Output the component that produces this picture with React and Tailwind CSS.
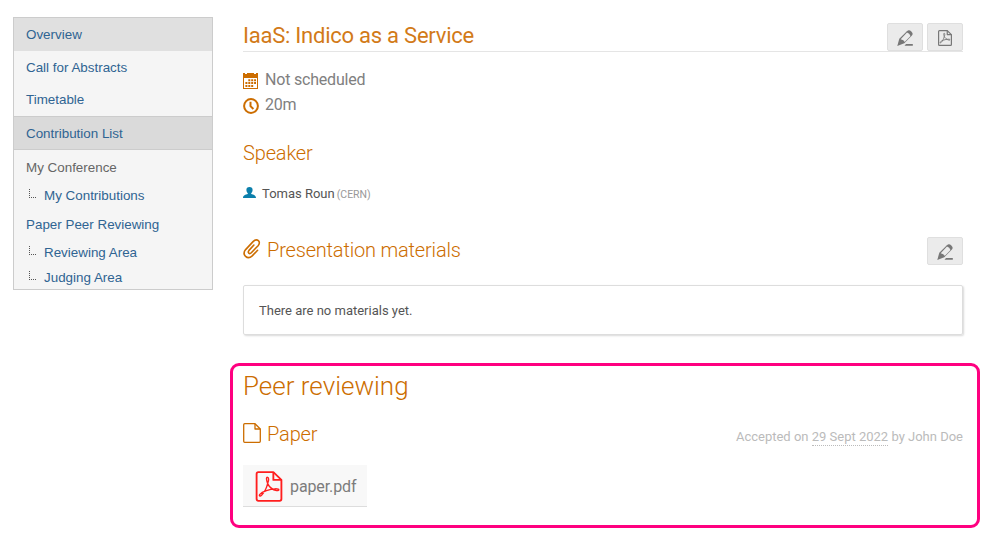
const linkColor = 'text-[#2f6492]';

function SideItem({ children, className = '' }) {
  return <li className={`flex items-center pl-3 ${className}`}>{children}</li>;
}

function SubItem({ children, className = '' }) {
  return (
    <li className={`flex items-center pl-[15px] ${linkColor} ${className}`}>
      <svg className="mr-2 mb-1 h-[9px] w-[7px] shrink-0" viewBox="0 0 7 9" shapeRendering="crispEdges">
        <path d="M.5 0v9M0 8.500h7" fill="none" stroke="#555" strokeDasharray="1 1" />
      </svg>
      {children}
    </li>
  );
}

function Sidebar() {
  return (
    <nav className="h-[273px] w-[200px] shrink-0 border border-[#cccccc] bg-[#f5f5f5] font-['Liberation_Sans',Arial,sans-serif] text-[13.4px] leading-4">
      <ul>
        <SideItem className={`h-[33px] bg-[#e0e0e0] ${linkColor}`}>Overview</SideItem>
        <SideItem className={`h-8 pt-px ${linkColor}`}>Call for Abstracts</SideItem>
        <SideItem className={`h-[33px] ${linkColor}`}>Timetable</SideItem>
        <SideItem className={`h-[34px] border-y border-[#cccccc] bg-[#dadada] pt-px ${linkColor}`}>Contribution List</SideItem>
        <SideItem className="h-[34px] pt-px text-[#666]">My Conference</SideItem>
        <SubItem className="h-[23px]">My Contributions</SubItem>
        <SideItem className={`h-[34px] pt-px ${linkColor}`}>Paper Peer Reviewing</SideItem>
        <SubItem className="h-[23px]">Reviewing Area</SubItem>
        <SubItem className="h-[25px] pt-[2px]">Judging Area</SubItem>
      </ul>
    </nav>
  );
}

function IconButton({ children }) {
  return (
    <button className="flex h-7 w-9 items-center justify-center rounded-[2px] border border-[#dfdfdf] bg-[#ebebeb] pt-px text-[#777]">
      {children}
    </button>
  );
}

function PencilIcon() {
  return (
    <svg className="h-4 w-4" viewBox="0 0 16 16">
      <path d="M2.300 8.700 9.900 1.200Q12-.7 14.300 1.400T14.900 5.600L7.300 13.200 .3 15.900Z" fill="currentColor" />
      <path d="M3.700 9.200 10 2.500Q12.600 3.200 13.500 5.900L7.700 12Q6.900 9.600 3.700 9.200Z" fill="#ebebeb" />
      <path d="M7.500 15.800 9 14H15.800V15.800Z" fill="currentColor" />
    </svg>
  );
}

function PdfIcon({ className, strokeWidth }) {
  return (
    <svg className={className} viewBox="0 0 28 32" fill="none" stroke="currentColor" strokeWidth={strokeWidth} strokeLinejoin="round">
      <path d="M3 1.200H18.500L26.800 9.200V29Q26.800 30.800 25 30.800H3Q1.200 30.800 1.200 29V3Q1.200 1.200 3 1.200Z" />
      <path d="M18.500 1.200V9.200H26.800" />
      <path
        strokeWidth={strokeWidth * 0.75}
        d="M12.600 6.500C10.800 6 11.300 9.700 12.600 13 11.500 17.500 9 22.300 6.300 25 4.800 26.400 3.300 25.600 4.500 24.100 7 21 15 18.600 20.300 18.400 25.500 18.200 25 20.700 21.800 20.200 17.500 19.300 14 15.800 12.600 13 14.100 9.500 13.800 6.800 12.600 6.500Z"
      />
    </svg>
  );
}

function CalendarIcon() {
  return (
    <svg className="relative top-px h-4 w-[15px] shrink-0 text-[#cc6d00]" viewBox="0 0 15 16" fill="currentColor">
      <path d="M0 0H2V1H4V0H11V1H13V0H15V5H0Z" />
      <path d="M0 4H1V16H0ZM14 4H15V16H14ZM0 15H15V16H0Z" />
      <path d="M5.300 6.200H7.300V8.200H5.300ZM8.200 6.200H10.200V8.200H8.200ZM11.100 6.200H13V8.200H11.100ZM2.400 9H4.400V11H2.400ZM5.300 9H7.300V11H5.300ZM8.200 9H10.200V11H8.200ZM11.100 9H13V11H11.100ZM2.400 11.900H4.400V13.900H2.400ZM5.300 11.900H7.300V13.900H5.300ZM8.200 11.900H10.200V13.900H8.200Z" />
    </svg>
  );
}

function ClockIcon() {
  return (
    <svg className="relative top-px h-4 w-4 shrink-0 text-[#cc6d00]" viewBox="0 0 16 16" fill="none" stroke="currentColor" strokeWidth="2">
      <circle cx="8" cy="8" r="6.900" />
      <path d="M7.500 3.700V8.200L10.400 11" />
    </svg>
  );
}

function UserIcon() {
  return (
    <svg className="mb-[3px] h-[11px] w-[13px] shrink-0" viewBox="0 0 13 11" fill="#0b7fab">
      <path d="M6.500 0C8.600 0 9.700 1.200 9.600 3 9.500 4.700 8.800 5.700 8.200 6.200V7.100C10.500 7.600 13 8.600 13 11H0C0 8.600 2.500 7.600 4.800 7.100V6.200C4.200 5.700 3.500 4.700 3.400 3 3.300 1.200 4.400 0 6.500 0Z" />
    </svg>
  );
}

function ClipIcon() {
  return (
    <svg className="mb-[2px] h-5 w-[18px] shrink-0" viewBox="0 0 18 20" fill="none" stroke="#cc6d00" strokeWidth="1.600" strokeLinecap="round" strokeLinejoin="round">
      <path d="M10.900 6 6 11.400C4.200 13.700 6.500 15.600 8.300 13.700L15.100 6.700C18.600 2.500 14-1 10.300 2.400L2.600 10.600C-1.500 15.700 4.400 21.300 9.200 16.900L14.600 11.300" />
    </svg>
  );
}

function FileIcon() {
  return (
    <svg className="mb-[3px] h-5 w-[18px] shrink-0" viewBox="0 0 18 20" fill="none" stroke="#cc6d00" strokeWidth="1.300" strokeLinejoin="round">
      <path d="M1.700.7H12L17.300 6V18.300Q17.300 19.300 16.300 19.300H1.700Q.7 19.300.7 18.300V1.700Q.7.7 1.700.7Z" />
      <path d="M12 .7V6H17.300" />
    </svg>
  );
}

export default function App() {
  return (
    <div className="flex h-[546px] w-[996px] overflow-hidden bg-white pt-[17px] pl-[13px] font-[Roboto,sans-serif]">
      <Sidebar />
      <main className="ml-[17px] w-[750px]">
        <div className="pr-[17px] pl-[13px]">
          <header className="flex h-[35px] justify-between border-b border-[#e5e5e5] pt-[6px]">
            <h1 className="text-[22px] leading-[25px] tracking-[-0.24px] text-[#d27a18]">IaaS: Indico as a Service</h1>
            <div className="flex gap-1">
              <IconButton><PencilIcon /></IconButton>
              <IconButton><PdfIcon className="h-4 w-[14px]" strokeWidth={2.4} /></IconButton>
            </div>
          </header>

          <div className="mt-[15px] text-base leading-[25px] tracking-[-0.2px] text-[#808080]">
            <div className="flex h-[25px] items-center gap-[7px]"><CalendarIcon />Not scheduled</div>
            <div className="flex h-[25px] items-center gap-[6px]"><ClockIcon />20m</div>
          </div>

          <h2 className="mt-6 text-xl leading-6 font-light tracking-[-0.15px] text-[#cc6d00]">Speaker</h2>
          <div className="mt-[19px] flex h-5 items-center text-[13px] text-[#555]">
            <UserIcon />
            <span className="ml-[6px]">Tomas Roun</span>
            <span className="ml-[2px] pt-px text-[10.5px] text-[#999]">(CERN)</span>
          </div>

          <div className="mt-8 flex h-[30px] items-center justify-between">
            <h2 className="flex items-center gap-[6px] pb-[3px] text-xl leading-6 font-light tracking-[-0.18px] text-[#cc6d00]">
              <ClipIcon />Presentation materials
            </h2>
            <IconButton><PencilIcon /></IconButton>
          </div>
          <div className="mt-[19px] flex h-[50px] items-center rounded-[2px] border border-[#dddddd] pt-px pl-[15px] text-[13px] text-[#555] shadow-[1px_1px_2px_rgba(0,0,0,0.15)]">
            There are no materials yet.
          </div>
        </div>

        <section className="mt-7 h-[165px] w-[750px] rounded-[9px] border-[3px] border-[#ff0080] pr-[14px] pl-[10px]">
          <h2 className="pt-1 text-[26px] leading-[32px] font-light text-[#cc6d00]">Peer reviewing</h2>
          <div className="mt-5 flex h-6 items-center justify-between">
            <h3 className="flex items-center gap-[6px] text-xl leading-6 font-light tracking-[-0.15px] text-[#cc6d00]"><FileIcon />Paper</h3>
            <p className="pt-[6px] text-[13px] leading-4 text-[#bbb]">
              Accepted on <span className="border-b border-dotted border-[#bbb] pb-px">29 Sept 2022</span> by John Doe
            </p>
          </div>
          <a className="mt-[19px] flex h-[42px] w-[124px] items-center gap-[7px] border-b border-[#dddddd] bg-[#f8f8f8] pt-[2px] pl-3 text-base tracking-[-0.1px] text-[#7c7c7c]">
            <span className="text-[#ff1e1e]"><PdfIcon className="h-[31px] w-7" strokeWidth={1.9} /></span>
            <span>paper.pdf</span>
          </a>
        </section>
      </main>
    </div>
  );
}
